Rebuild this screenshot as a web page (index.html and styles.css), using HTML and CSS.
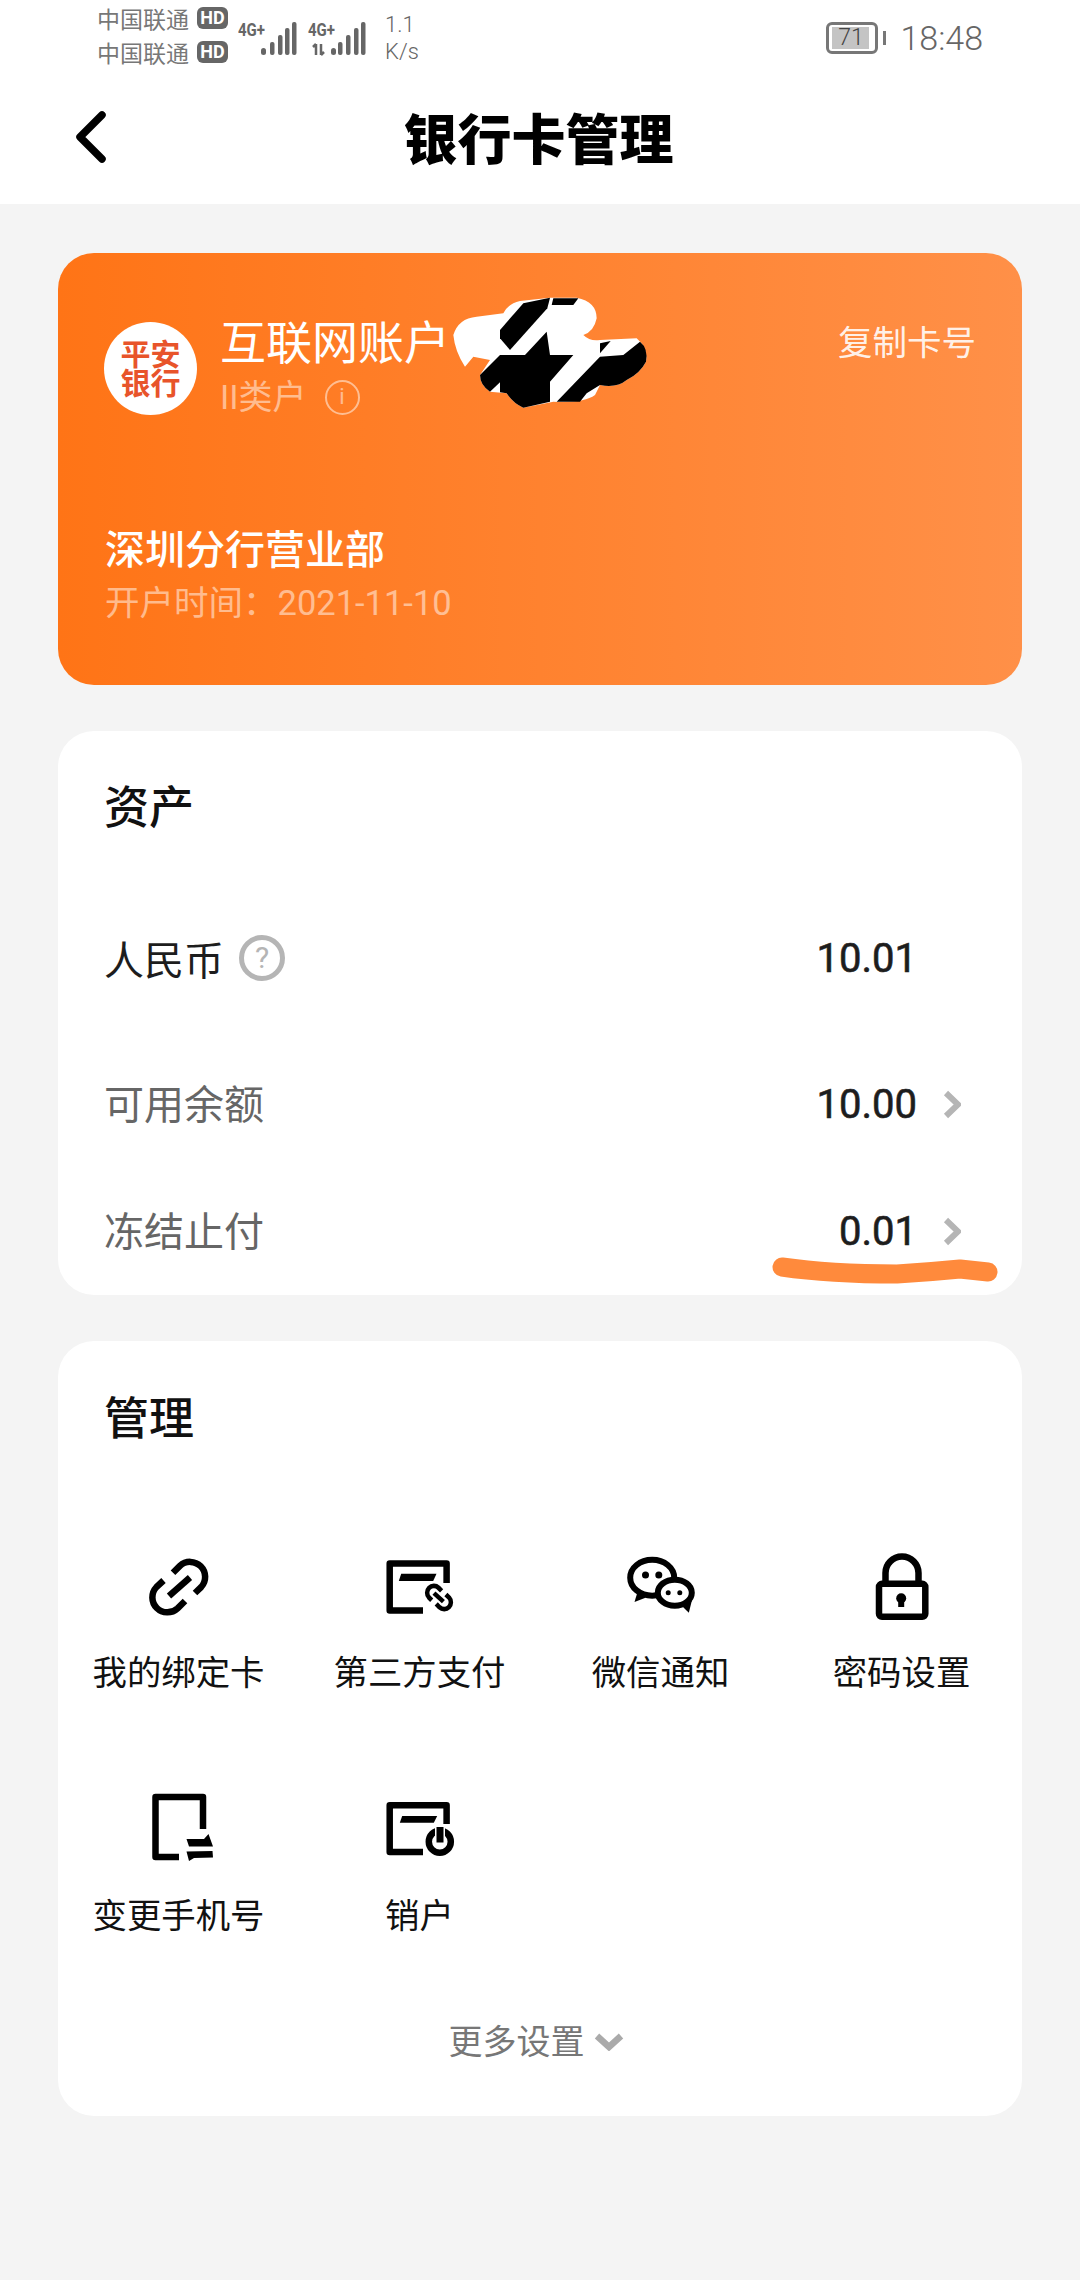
FILE: index.html
```html
<!DOCTYPE html>
<html lang="zh-CN">
<head>
    <meta charset="UTF-8">
    <meta name="viewport" content="width=device-width, initial-scale=1.0">
    <title>银行卡管理</title>
    <link rel="stylesheet" href="styles.css">
</head>
<body>

<div class="top">
    <div class="status">
        <div class="status-left">
            <div class="carriers">
                <div class="carrier">中国联通<span class="hd">HD</span></div>
                <div class="carrier">中国联通<span class="hd">HD</span></div>
            </div>
            <svg class="signal" width="130" height="40" viewBox="238 15 130 40">
                <text x="238" y="33" class="net" textLength="27" lengthAdjust="spacingAndGlyphs">4G+</text>
                <rect x="261" y="45" width="5" height="7" rx="2.5"/>
                <rect x="270" y="39" width="4.5" height="13" rx="2"/>
                <rect x="278" y="32" width="4.5" height="20" rx="2"/>
                <rect x="285" y="25" width="4.5" height="27" rx="2"/>
                <rect x="292" y="19" width="4.5" height="33" rx="2"/>
                <text x="308" y="33" class="net" textLength="27" lengthAdjust="spacingAndGlyphs">4G+</text>
                <path d="M316 52V41M313 44l3-3M321 41v11M324 49l-3 3" class="arrows"/>
                <rect x="331" y="45" width="5" height="7" rx="2.5"/>
                <rect x="338" y="39" width="4.5" height="13" rx="2"/>
                <rect x="346" y="32" width="4.5" height="20" rx="2"/>
                <rect x="354" y="25" width="4.5" height="27" rx="2"/>
                <rect x="361" y="19" width="4.5" height="33" rx="2"/>
            </svg>
            <div class="speed">1.1<br>K/s</div>
        </div>
        <div class="status-right">
            <div class="battery"><span class="battery-fill">71</span></div>
            <div class="battery-nub"></div>
            <div class="time">18:48</div>
        </div>
    </div>
    <div class="nav">
        <svg class="back" width="34" height="52" viewBox="0 0 34 52">
            <polyline points="28,4 6,26 28,48"/>
        </svg>
        <div class="nav-title">银行卡管理</div>
        <div></div>
    </div>
</div>

<div class="bank-card">
    <div class="bank-head">
        <div class="logo">平安<br>银行</div>
        <div class="bank-info">
            <div class="bank-name">互联网账户</div>
            <div class="bank-type">II类户<span class="info-dot">i</span></div>
        </div>
        <div class="copy">复制卡号</div>
    </div>
    <div class="branch">深圳分行营业部</div>
    <div class="open-date">开户时间：2021-11-10</div>

    <svg class="scribble" width="220" height="135" viewBox="0 0 660 405">
        <path class="scribble-white" d="M40 150Q55 100 110 95L190 85Q205 55 240 48L330 38L410 38Q470 50 470 100Q462 140 430 150Q450 170 480 165L590 160Q625 190 618 230Q600 265 560 285Q530 310 480 300L465 330Q430 355 340 350L250 368Q220 355 200 325L150 320Q120 300 120 270L150 225L100 215L75 245Q45 200 40 150Z"/>
        <path d="M180 135L250 55L330 38L322 70L210 195L180 160Z"/>
        <path d="M340 40L415 40L400 60L335 60Z"/>
        <path d="M120 270L180 210L255 210L320 140L330 210L400 210L330 290L330 350L250 368Q220 355 200 325L180 322L180 292L150 320Q120 300 120 270Z"/>
        <path d="M350 350L480 215L550 210L600 170Q625 190 618 230Q600 265 560 285Q530 310 480 300L440 325L420 350Z"/>
        <path d="M480 175L512 168L480 205Z"/>
    </svg>
</div>

<div class="panel assets">
    <div class="panel-title">资产</div>
    <div class="row row-main">
        <div class="row-label">人民币<span class="help">?</span></div>
        <div class="row-value">10.01</div>
    </div>
    <div class="row">
        <div class="row-label muted">可用余额</div>
        <div class="row-value">10.00</div>
        <svg class="chevron" width="18" height="29" viewBox="0 0 18 29"><polyline points="3,3 15,14.5 3,26"/></svg>
    </div>
    <div class="row">
        <div class="row-label muted">冻结止付</div>
        <div class="row-value">0.01</div>
        <svg class="chevron" width="18" height="29" viewBox="0 0 18 29"><polyline points="3,3 15,14.5 3,26"/></svg>
    </div>
    <svg class="underline" width="300" height="40" viewBox="0 0 300 40">
        <path d="M72 17Q120 24 187 24Q220 22 250 19L278 22"/>
    </svg>
</div>

<div class="panel manage">
    <div class="panel-title">管理</div>
    <div class="menu">
        <div class="menu-item">
            <svg class="menu-icon" viewBox="0 0 70 70">
                <path class="line" d="M29 21.8L35.9 14.9A15 15 0 0 1 57.1 36.1L51 42"/>
                <path class="line" d="M19.5 29.5L12.4 36.1A15 15 0 0 0 33.6 57.3L41 50"/>
                <path class="line" d="M25 45L46 26.5"/>
            </svg>
            <div class="menu-label">我的绑定卡</div>
        </div>
        <div class="menu-item">
            <svg class="menu-icon" viewBox="0 0 70 70">
                <path class="line join" d="M61.6 32V12.5H4.7V59.5H38"/>
                <path d="M16.2 22.7H51.5L48.2 30H13.8Z"/>
                <g transform="translate(67.5 33) scale(-.45 .46) translate(-4.8 -6.7)">
                    <path class="line thick" d="M29 21.8L35.9 14.9A15 15 0 0 1 57.1 36.1L51 42"/>
                    <path class="line thick" d="M19.5 29.5L12.4 36.1A15 15 0 0 0 33.6 57.3L41 50"/>
                    <path class="line thick" d="M25 45L46 26.5"/>
                </g>
            </svg>
            <div class="menu-label">第三方支付</div>
        </div>
        <div class="menu-item">
            <svg class="menu-icon" viewBox="0 0 70 70">
                <path d="M8.5 51L11.8 40L19.5 46.7Z"/>
                <ellipse class="bubble" cx="26.2" cy="26.7" rx="22" ry="18"/>
                <circle cx="19.5" cy="24" r="3.5"/>
                <circle cx="32.8" cy="24" r="3.5"/>
                <path d="M62.8 61.7L56 55L66 49Z"/>
                <ellipse class="bubble" cx="48.8" cy="41.7" rx="17" ry="13"/>
                <circle cx="42.2" cy="41.7" r="2.5"/>
                <circle cx="53.8" cy="41.7" r="2.5"/>
            </svg>
            <div class="menu-label">微信通知</div>
        </div>
        <div class="menu-item">
            <svg class="menu-icon" viewBox="0 0 70 70">
                <path class="line" d="M18.5 33V22a16.5 16.5 0 0 1 33 0V33"/>
                <rect class="line join" x="12" y="32.8" width="46.3" height="33" rx="3"/>
                <circle cx="34.2" cy="47.3" r="5"/>
                <rect x="31.2" y="48" width="6" height="8"/>
            </svg>
            <div class="menu-label">密码设置</div>
        </div>
        <div class="menu-item">
            <svg class="menu-icon" viewBox="0 0 70 70">
                <path class="line join" d="M59 35V3H11.5V63H35"/>
                <path d="M42.5 45H60L64.5 40L69 52.5H45Z"/>
                <path d="M42.5 57.5L68.5 57L69 63.5L50 64L45 67Z"/>
            </svg>
            <div class="menu-label">变更手机号</div>
        </div>
        <div class="menu-item">
            <svg class="menu-icon" viewBox="0 0 70 70">
                <path class="line join" d="M61.6 30V11.3H4.7V58H38"/>
                <path d="M17.2 22H52.2L48.8 28.7H14.8Z"/>
                <circle class="line" cx="54.8" cy="47.7" r="11"/>
                <rect x="50" y="33" width="10" height="17" class="power-gap"/>
                <rect x="51.5" y="33" width="7" height="15.5"/>
            </svg>
            <div class="menu-label">销户</div>
        </div>
    </div>
    <div class="more">更多设置
        <svg class="more-arrow" width="30" height="18" viewBox="0 0 30 18"><polyline points="3,3 15,14 27,3"/></svg>
    </div>
</div>

</body>
</html>
```

FILE: styles.css
```css
body {
    font-family: Roboto, "Noto Sans CJK SC", sans-serif;
    margin: 0;
    height: 2280px;
    overflow: hidden;
    background-color: #f4f4f4;
}
.top {
    height: 204px;
    background-color: #fff;
}
.status {
    height: 76px;
    padding: 0 97px;
    display: flex;
    justify-content: space-between;
    align-items: center;
    color: #777;
}
.status-left {
    display: flex;
    align-items: center;
}
.carriers {
    margin-top: -6px;
}
.carrier {
    display: flex;
    align-items: center;
    height: 34px;
    font-size: 23px;
    gap: 8px;
}
.hd {
    width: 31px;
    height: 22px;
    line-height: 22px;
    border-radius: 6px;
    background-color: #666;
    color: #fff;
    font-size: 18px;
    font-weight: 700;
    text-align: center;
}
.signal {
    margin-left: 10px;
    fill: #666;
}
.net {
    font-size: 18px;
    font-weight: 700;
}
.arrows {
    fill: none;
    stroke: #666;
    stroke-width: 2.5;
}
.speed {
    margin-left: 17px;
    font-size: 22px;
    line-height: 27px;
    font-weight: 300;
    color: #666;
}
.status-right {
    display: flex;
    align-items: center;
}
.battery {
    width: 52px;
    height: 32px;
    box-sizing: border-box;
    border: 3px solid #777;
    border-radius: 6px;
    padding: 2px 3px;
}
.battery-fill {
    display: block;
    width: 37px;
    height: 22px;
    line-height: 22px;
    background-color: #c4c4c4;
    color: #444;
    font-size: 23px;
    font-weight: 300;
    text-align: center;
}
.battery-nub {
    width: 3px;
    height: 14px;
    margin-left: 5px;
    background-color: #777;
}
.time {
    margin-left: 14px;
    font-size: 34px;
    font-weight: 300;
    color: #666;
}
.nav {
    height: 128px;
    padding: 0 75px 0 72px;
    display: grid;
    grid-template-columns: 1fr auto 1fr;
    align-items: center;
}
.back {
    margin: -7px 0 0 2px;
    fill: none;
    stroke: #000;
    stroke-width: 7.5;
    stroke-linecap: round;
    stroke-linejoin: round;
}
.nav-title {
    padding-top: 3px;
    font-size: 54px;
    font-weight: 900;
    color: #000;
    line-height: 72px;
}
.bank-card {
    position: relative;
    height: 432px;
    margin: 49px 58px 0;
    padding: 62px 46px 0 47px;
    box-sizing: border-box;
    border-radius: 36px;
    background: linear-gradient(90deg, #ff7416, #ff9048);
    color: #fff;
}
.bank-head {
    display: flex;
    align-items: flex-start;
    height: 106px;
}
.logo {
    width: 93px;
    height: 93px;
    margin: 7px 0 0 -1px;
    border-radius: 50%;
    background-color: #fff;
    color: #e8542a;
    font-size: 30px;
    line-height: 29px;
    font-weight: 700;
    display: flex;
    align-items: center;
    justify-content: center;
    text-align: center;
}
.bank-info {
    margin-left: 23px;
    flex: 1;
}
.bank-name {
    font-size: 46px;
    line-height: 56px;
}
.bank-type {
    display: flex;
    align-items: center;
    gap: 18px;
    font-size: 34px;
    line-height: 48px;
    margin-top: 2px;
    color: rgba(255, 255, 255, 0.5);
}
.info-dot {
    width: 35px;
    height: 35px;
    box-sizing: border-box;
    border: 2.5px solid rgba(255, 255, 255, 0.5);
    border-radius: 50%;
    font-size: 22px;
    line-height: 30px;
    text-align: center;
}
.copy {
    font-size: 34.5px;
    line-height: 56px;
    color: rgba(255, 255, 255, 0.9);
}
.branch {
    margin-top: 105px;
    font-size: 40px;
    line-height: 50px;
    font-weight: 500;
}
.open-date {
    margin-top: 5px;
    font-size: 34.5px;
    line-height: 44px;
    color: rgba(255, 255, 255, 0.5);
}
.scribble {
    position: absolute;
    left: 382px;
    top: 32px;
    fill: #000;
}
.scribble-white {
    fill: #fff;
}
.panel {
    position: relative;
    margin: 46px 58px 0;
    border-radius: 36px;
    background-color: #fff;
    color: #1d1d1d;
}
.panel-title {
    padding: 0 46px;
    font-size: 45px;
    line-height: 60px;
    font-weight: 500;
    color: #111;
}
.assets {
    height: 564px;
    padding-top: 48px;
    box-sizing: border-box;
}
.row {
    height: 88px;
    margin-top: 39px;
    padding: 0 61px 0 46px;
    display: flex;
    align-items: center;
}
.row-main {
    margin: 75px 0 58px;
    padding-right: 105px;
}
.row-label {
    flex: 1;
    display: flex;
    align-items: center;
    gap: 15px;
    font-size: 40px;
}
.muted {
    margin-bottom: 4px;
    color: #666;
}
.row-value {
    font-size: 40px;
    font-weight: 400;
    -webkit-text-stroke: 0.6px #1d1d1d;
}
.help {
    width: 46px;
    height: 46px;
    box-sizing: border-box;
    border: 5px solid #b5b5b5;
    border-radius: 50%;
    color: #b5b5b5;
    font-size: 30px;
    line-height: 36px;
    text-align: center;
}
.chevron {
    margin-left: 26px;
    fill: none;
    stroke: #b5b5b5;
    stroke-width: 6;
}
.underline {
    position: absolute;
    left: 652px;
    top: 519px;
    fill: none;
    stroke: #ff8a3c;
    stroke-width: 19;
    stroke-linecap: round;
    stroke-linejoin: round;
}
.manage {
    height: 775px;
    padding-top: 49px;
    box-sizing: border-box;
}
.menu {
    margin-top: 101px;
    display: grid;
    grid-template-columns: repeat(4, 1fr);
    row-gap: 96px;
}
.menu-item {
    display: flex;
    flex-direction: column;
    align-items: center;
}
.menu-icon {
    display: block;
    width: 70px;
    height: 70px;
    overflow: visible;
    fill: #000;
}
.line {
    fill: none;
    stroke: #000;
    stroke-width: 6.5;
}
.join {
    stroke-linejoin: round;
}
.thick {
    stroke-width: 10;
}
.bubble {
    fill: #fff;
    stroke: #000;
    stroke-width: 6;
}
.power-gap {
    fill: #fff;
}
.menu-label {
    margin-top: 27px;
    font-size: 34.4px;
    line-height: 50px;
    color: #111;
}
.more {
    margin-top: 76px;
    padding-right: 8px;
    display: flex;
    justify-content: center;
    align-items: center;
    gap: 9px;
    font-size: 34px;
    line-height: 50px;
    color: #777;
}
.more-arrow {
    fill: none;
    stroke: #aaa;
    stroke-width: 6.5;
}
```
